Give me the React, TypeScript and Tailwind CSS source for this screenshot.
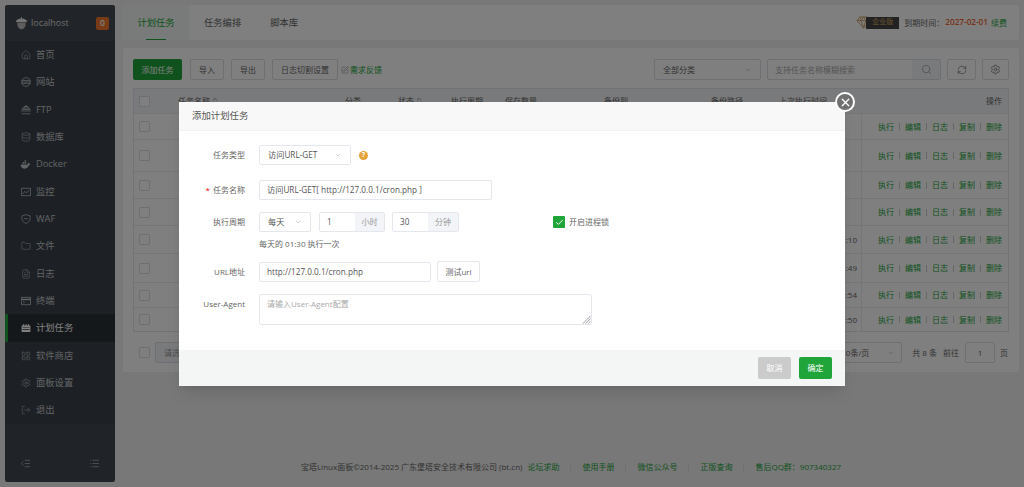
import type { ReactNode } from 'react';
import {
  House,
  Database,
  Shield,
  Folder,
  FileText,
  LayoutGrid,
  Settings,
  LogOut,
  IndentDecrease,
  List,
  ChevronDown,
  Search,
  RefreshCw,
  ChevronsUpDown,
  X,
  Check,
  SquarePen,
} from 'lucide-react';

function Acorn() {
  return (
    <svg viewBox="0 0 16 16" className="w-[13px] h-[14px] shrink-0">
      <path d="M1 5.5 C3 3 6 2.6 8 2.6 S13 3 15 5.5 L14 7 H2 Z" fill="#e8e8e8" />
      <path d="M7.4 0.5 h1.2 v2.4 h-1.2 Z" fill="#e8e8e8" />
      <path d="M3 7.6 H13 V10 C13 13 10 15.4 8 15.8 C6 15.4 3 13 3 10 Z" fill="#bdbdbd" />
    </svg>
  );
}

function Whale() {
  return (
    <svg viewBox="0 0 16 16" className="w-[11px] h-[11px]" fill="currentColor">
      <path d="M1 8 H11 C11 6.5 12 5 13 5 C13.5 6 13.6 6.6 13.5 7.2 C14.2 7 14.8 7.2 15.4 7.7 C14.8 8.8 13.8 9 13 9 C12.2 12 9.5 14 6 14 C3 14 1 11.5 1 8 Z" />
      <path d="M4 4.5 h2 v2.5 h-2 Z M6.8 4.5 h2 v2.5 h-2 Z M6.8 1.8 h2 v2.2 h-2 Z" />
    </svg>
  );
}

function Glyph({ children, fill }: { children: ReactNode; fill?: boolean }) {
  return (
    <svg
      viewBox="0 0 16 16"
      className="w-[10px] h-[10px]"
      fill={fill ? 'currentColor' : 'none'}
      stroke={fill ? 'none' : 'currentColor'}
      strokeWidth="1.2"
    >
      {children}
    </svg>
  );
}

const navIcon = 'w-[10px] h-[10px]';
const navItems: { label: string; icon: ReactNode; active?: boolean; h: string }[] = [
  { label: '首页', icon: <House className={navIcon} strokeWidth={1.3} />, h: 'h-[27px]' },
  {
    label: '网站',
    icon: (
      <Glyph>
        <circle cx="8" cy="8" r="7" />
        <path d="M1.5 5.5 H14.5 M1 8 H15 M1.5 10.5 H14.5" />
      </Glyph>
    ),
    h: 'h-[28px]',
  },
  {
    label: 'FTP',
    icon: (
      <Glyph>
        <path d="M2 11 A6.5 6.5 0 1 1 14 11 M1 14 H15 M2 7 H14 M8 1 V11 M5 11 C4 6 5 3 8 1 C11 3 12 6 11 11" />
      </Glyph>
    ),
    h: 'h-[27px]',
  },
  { label: '数据库', icon: <Database className={navIcon} strokeWidth={1.3} />, h: 'h-[27px]' },
  { label: 'Docker', icon: <Whale />, h: 'h-[28px]' },
  {
    label: '监控',
    icon: (
      <Glyph>
        <rect x="1" y="2" width="14" height="12" />
        <path d="M3 11 L6 7 L9 9.5 L13 5" />
      </Glyph>
    ),
    h: 'h-[27px]',
  },
  {
    label: 'WAF',
    icon: (
      <Glyph>
        <path d="M8 1 L14.5 3 V8 C14.5 11.5 11 14 8 15 C5 14 1.5 11.5 1.5 8 V3 Z M5 7.5 H11" />
      </Glyph>
    ),
    h: 'h-[27px]',
  },
  { label: '文件', icon: <Folder className={navIcon} strokeWidth={1.3} />, h: 'h-[28px]' },
  { label: '日志', icon: <FileText className={navIcon} strokeWidth={1.3} />, h: 'h-[27px]' },
  {
    label: '终端',
    icon: (
      <Glyph>
        <rect x="1" y="2" width="14" height="12" />
        <path d="M1 5.5 H15" strokeWidth="2.4" />
        <path d="M3.5 8 L5.5 10 L3.5 12" />
      </Glyph>
    ),
    h: 'h-[27px]',
  },
  {
    label: '计划任务',
    icon: (
      <Glyph fill>
        <path d="M1 4 H3.5 V1.5 H5 V4 H7.2 V1.5 H8.8 V4 H11 V1.5 H12.5 V4 H15 V14.5 H1 Z" />
        <path d="M2.5 7 H13.5 V8 H2.5 Z M2.5 10 H13.5 V11 H2.5 Z" fill="#2b3036" />
      </Glyph>
    ),
    active: true,
    h: 'h-[28px]',
  },
  { label: '软件商店', icon: <LayoutGrid className={navIcon} strokeWidth={1.3} />, h: 'h-[27px]' },
  { label: '面板设置', icon: <Settings className={navIcon} strokeWidth={1.3} />, h: 'h-[27px]' },
  { label: '退出', icon: <LogOut className={navIcon} strokeWidth={1.3} />, h: 'h-[28px]' },
];

function Sidebar() {
  return (
    <aside className="w-[110px] shrink-0 rounded-[3px] bg-[#3a424b] flex flex-col text-[#c4c6c8]">
      <div className="h-[36px] bg-[#434a53] rounded-t-[3px] flex items-center pl-[10px] pr-[6px] shrink-0">
        <Acorn />
        <span className="ml-[3px] text-[9px] text-[#d8d8d8]">localhost</span>
        <span className="ml-auto w-[13px] h-[13px] rounded-[2px] bg-[#f0762e] text-white text-[8.5px] font-semibold flex items-center justify-center">
          0
        </span>
      </div>
      <nav className="bg-[#3a424b]">
        {navItems.map((item) => (
          <div
            key={item.label}
            className={`${item.h} flex items-center text-[9.3px] ${
              item.active ? 'bg-[#2b3036] border-l-[3px] border-[#20a53a] pl-[12px] text-white' : 'pl-[15px]'
            }`}
          >
            <span className="w-[11px] mr-[5px] flex justify-center">{item.icon}</span>
            {item.label}
          </div>
        ))}
      </nav>
      <div className="mt-auto h-[59px] bg-[#40474f] rounded-b-[3px] flex items-end justify-between px-[15px] pb-[13px]">
        <IndentDecrease className="w-[11px] h-[11px]" strokeWidth={1.4} />
        <List className="w-[11px] h-[11px]" strokeWidth={1.4} />
      </div>
    </aside>
  );
}

function TopBar() {
  return (
    <div className="h-[35px] shrink-0 rounded-[3px] bg-white flex items-stretch text-[9.3px] text-[#666]">
      <div className="relative w-[66px] bg-[#f1f7f2] rounded-l-[3px] flex items-center justify-center text-[#20a53a]">
        计划任务
        <span className="absolute bottom-0 left-[23px] w-[20px] h-[1px] bg-[#20a53a]" />
      </div>
      <div className="ml-[15px] flex items-center">任务编排</div>
      <div className="ml-[29px] flex items-center">脚本库</div>
      <div className="ml-auto pr-[12px] flex items-center text-[8px]">
        <svg viewBox="0 0 16 14" className="w-[15px] h-[13px] text-[#c9a063]" fill="none" stroke="currentColor" strokeWidth="1">
          <path d="M4 1 H12 L15 5 L8 13 L1 5 Z M1 5 H15 M5.5 5 L8 13 L10.5 5 M4 1 L5.5 5 L8 1 L10.5 5 L12 1" />
        </svg>
        <span className="-ml-[5px] w-[33px] h-[12px] bg-[#444] text-[#d9a961] text-[7px] flex items-center justify-center">
          企业版
        </span>
        <span className="ml-[5px]">到期时间：</span>
        <span className="ml-[1px] text-[#f0652d] font-semibold text-[8.2px]">2027-02-01</span>
        <span className="ml-[3px] text-[#20a53a]">续费</span>
      </div>
    </div>
  );
}

function ToolButton({ w, children }: { w: string; children: ReactNode }) {
  return (
    <div className={`${w} h-[21px] rounded-[2px] border border-[#dcdfe6] bg-white flex items-center justify-center text-[8px] text-[#666]`}>
      {children}
    </div>
  );
}

function Toolbar() {
  return (
    <div className="flex items-center text-[8px] text-[#666]">
      <div className="w-[49px] h-[21px] rounded-[2px] bg-[#20a53a] text-white flex items-center justify-center">添加任务</div>
      <div className="ml-[8px]">
        <ToolButton w="w-[34px]">导入</ToolButton>
      </div>
      <div className="ml-[7px]">
        <ToolButton w="w-[34px]">导出</ToolButton>
      </div>
      <div className="ml-[7px]">
        <ToolButton w="w-[66px]">日志切割设置</ToolButton>
      </div>
      <SquarePen className="ml-[3px] w-[8px] h-[8px]" strokeWidth={1.3} />
      <span className="ml-[1px] text-[#20a53a]">需求反馈</span>
      <div className="ml-auto w-[107px] h-[21px] rounded-[2px] border border-[#dcdfe6] bg-white flex items-center justify-between px-[8px]">
        全部分类
        <ChevronDown className="w-[8px] h-[8px] text-[#bbb]" />
      </div>
      <div className="ml-[6px] w-[174px] h-[21px] rounded-[2px] border border-[#dcdfe6] bg-white flex items-center">
        <span className="pl-[7px] text-[#aaa]">支持任务名称模糊搜索</span>
        <span className="ml-auto w-[28px] h-full bg-[#f2f4f7] flex items-center justify-center">
          <Search className="w-[11px] h-[11px] text-[#888]" strokeWidth={1.3} />
        </span>
      </div>
      <div className="ml-[6px] w-[29px] h-[21px] rounded-[2px] border border-[#dcdfe6] bg-white flex items-center justify-center">
        <RefreshCw className="w-[10px] h-[10px]" strokeWidth={1.5} />
      </div>
      <div className="ml-[6px] w-[27px] h-[21px] rounded-[2px] border border-[#dcdfe6] bg-white flex items-center justify-center">
        <Settings className="w-[11px] h-[11px]" strokeWidth={1.4} />
      </div>
    </div>
  );
}

function Box() {
  return <span className="w-[11px] h-[11px] shrink-0 rounded-[1px] border border-[#dcdfe6] bg-white" />;
}

const rows = [
  { h: 'h-[26px]', time: '' },
  { h: 'h-[32px]', time: '' },
  { h: 'h-[27px]', time: '' },
  { h: 'h-[27px]', time: '' },
  { h: 'h-[28px]', time: ':10' },
  { h: 'h-[29px]', time: ':49' },
  { h: 'h-[25px]', time: ':54' },
  { h: 'h-[24px]', time: ':50' },
];

const actions = ['执行', '编辑', '日志', '复制', '删除'];

function TaskTable() {
  return (
    <div className="mt-[8px] border border-[#e4e7ed] text-[8px] text-[#666]">
      <div className="h-[24px] bg-[#f2f4f7] grid grid-cols-[44px_167px_53px_53px_54px_99px_107px_68px_82px_1fr] items-center">
        <span className="pl-[5px] flex">
          <Box />
        </span>
        <span className="flex items-center">
          任务名称
          <ChevronsUpDown className="ml-[1px] w-[8px] h-[8px]" />
        </span>
        <span>分类</span>
        <span className="flex items-center">
          状态
          <ChevronsUpDown className="ml-[1px] w-[8px] h-[8px]" />
        </span>
        <span>执行周期</span>
        <span>保存数量</span>
        <span>备份到</span>
        <span>备份路径</span>
        <span>上次执行时间</span>
        <span className="text-right pr-[6px]">操作</span>
      </div>
      {rows.map((row, i) => (
        <div key={i} className={`${row.h} border-t border-[#e9ebef] flex items-center`}>
          <span className="pl-[5px] flex">
            <Box />
          </span>
          <span className="ml-auto pr-[4px] text-[#666]">{row.time}</span>
          <div className="w-[147px] h-full border-l border-[#e9ebef] flex items-center justify-end pr-[6px] text-[#20a53a]">
            {actions.map((a, j) => (
              <span key={a} className="flex items-center">
                {j > 0 && <span className="mx-[5px] w-px h-[7px] bg-[#ccc]" />}
                {a}
              </span>
            ))}
          </div>
        </div>
      ))}
    </div>
  );
}

function Pagination() {
  return (
    <div className="mt-[10px] h-[21px] flex items-center text-[8px] text-[#666]">
      <span className="ml-[6px] flex">
        <Box />
      </span>
      <div className="ml-[5px] w-[60px] h-[21px] rounded-[2px] border border-[#dcdfe6] bg-[#f2f4f7] flex items-center pl-[8px] text-[#999]">
        请选择
      </div>
      <div className="ml-auto w-[70px] h-[21px] rounded-[2px] border border-[#dcdfe6] flex items-center justify-between pl-[8px] pr-[6px]">
        10条/页
        <ChevronDown className="w-[8px] h-[8px] text-[#bbb]" />
      </div>
      <span className="ml-[10px]">共 8 条</span>
      <span className="ml-[6px]">前往</span>
      <div className="ml-[6px] w-[30px] h-[21px] rounded-[2px] border border-[#dcdfe6] flex items-center justify-center">1</div>
      <span className="ml-[5px] mr-[1px]">页</span>
    </div>
  );
}

function Footer() {
  const links = ['论坛求助', '使用手册', '微信公众号', '正版查询', '售后QQ群：907340327'];
  return (
    <div className="mt-auto mb-[9px] flex justify-center text-[8px] text-[#666]">
      <span>宝塔Linux面板©2014-2025 广东堡塔安全技术有限公司 (bt.cn)</span>
      <span className="ml-[5px] flex items-center text-[#20a53a]">
        {links.map((l, i) => (
          <span key={l} className="flex items-center">
            {i > 0 && <span className="mx-[11px] w-px h-[8px] bg-[#ddd]" />}
            {l}
          </span>
        ))}
      </span>
    </div>
  );
}

function FormRow({ label, required, h, children }: { label: string; required?: boolean; h: string; children: ReactNode }) {
  return (
    <div className={`${h} flex items-start`}>
      <div className="w-[66px] h-[20px] flex items-center justify-end text-[8px] text-[#666]">
        {required && <span className="text-[#ef0808] mr-[3px]">*</span>}
        {label}
      </div>
      <div className="ml-[14px] flex items-start">{children}</div>
    </div>
  );
}

const inputClass =
  'h-[20px] rounded-[2px] border border-[#e4e7ed] bg-white flex items-center text-[8.2px] text-[#555]';

function Modal() {
  return (
    <div className="absolute left-[179px] top-[102px] w-[666px] h-[284px] rounded-[1px] bg-white flex flex-col shadow-lg">
      <div className="h-[29px] bg-[#f8f8f8] border-b border-[#f2f2f2] flex items-center pl-[13px] text-[9.4px] text-[#555]">
        添加计划任务
      </div>
      <div className="flex-1 pt-[14px]">
        <FormRow label="任务类型" h="h-[35px]">
          <div className={`${inputClass} w-[92px] justify-between px-[8px]`}>
            访问URL-GET
            <ChevronDown className="w-[8px] h-[8px] text-[#bbb]" />
          </div>
          <span className="ml-[8px] mt-[6px] w-[9px] h-[9px] rounded-full bg-[#e6a23c] text-white text-[7px] font-bold flex items-center justify-center">
            ?
          </span>
        </FormRow>
        <FormRow label="任务名称" required h="h-[32px]">
          <div className={`${inputClass} w-[233px] px-[7px]`}>访问URL-GET[ http://127.0.0.1/cron.php ]</div>
        </FormRow>
        <FormRow label="执行周期" h="h-[50px]">
          <div>
            <div className="flex items-center">
              <div className={`${inputClass} w-[52px] justify-between px-[8px]`}>
                每天
                <ChevronDown className="w-[8px] h-[8px] text-[#bbb]" />
              </div>
              <div className={`${inputClass} ml-[8px] w-[66px] pl-[7px]`}>
                1
                <span className="ml-auto w-[29px] h-full bg-[#f2f4f7] text-[#999] text-[8px] flex items-center justify-center">小时</span>
              </div>
              <div className={`${inputClass} ml-[7px] w-[67px] pl-[7px]`}>
                30
                <span className="ml-auto w-[30px] h-full bg-[#f2f4f7] text-[#999] text-[8px] flex items-center justify-center">分钟</span>
              </div>
              <span className="ml-[94px] w-[12px] h-[12px] rounded-[1px] bg-[#20a53a] flex items-center justify-center">
                <Check className="w-[9px] h-[9px] text-white" strokeWidth={2.5} />
              </span>
              <span className="ml-[4px] text-[8px] text-[#666]">开启进程锁</span>
            </div>
            <div className="mt-[6px] text-[8px] text-[#666] leading-[12px]">每天的 01:30 执行一次</div>
          </div>
        </FormRow>
        <FormRow label="URL地址" h="h-[32px]">
          <div className={`${inputClass} w-[172px] px-[7px]`}>http://127.0.0.1/cron.php</div>
          <div className="ml-[6px] -mt-[1px] w-[43px] h-[21px] rounded-[2px] border border-[#e4e7ed] flex items-center justify-center text-[8px] text-[#666]">
            测试url
          </div>
        </FormRow>
        <FormRow label="User-Agent" h="h-[31px]">
          <div className="relative w-[333px] h-[31px] rounded-[2px] border border-[#e4e7ed] px-[7px] pt-[3px] text-[8px] text-[#aaa]">
            请输入User-Agent配置
            <svg viewBox="0 0 10 10" className="absolute right-0 bottom-0 w-[9px] h-[9px] text-[#777]" stroke="currentColor" strokeWidth="0.8">
              <path d="M9.5 1 L1 9.5 M9.5 4 L4 9.5 M9.5 7 L7 9.5" />
            </svg>
          </div>
        </FormRow>
      </div>
      <div className="h-[36px] bg-[#f4f6f5] flex items-center justify-end pr-[13px] text-[8px] text-white">
        <div className="w-[33px] h-[22px] rounded-[2px] bg-[#cbcbcb] flex items-center justify-center">取消</div>
        <div className="ml-[8px] w-[33px] h-[22px] rounded-[2px] bg-[#20a53a] flex items-center justify-center">确定</div>
      </div>
      <div className="absolute -right-[10px] -top-[10px] w-[20px] h-[20px] rounded-full border-2 border-white bg-[#707070] flex items-center justify-center">
        <X className="w-[13px] h-[13px] text-white" strokeWidth={2.5} />
      </div>
    </div>
  );
}

export default function App() {
  return (
    <div className="relative w-[1024px] h-[487px] overflow-hidden bg-[#f0f0f0] font-['Open_Sans','Noto_Sans_CJK_SC',sans-serif]">
      <div className="h-full flex p-[5px] gap-[8px]">
        <Sidebar />
        <main className="flex-1 min-w-0 flex flex-col">
          <TopBar />
          <section className="mt-[8px] h-[324px] rounded-[3px] bg-white px-[10px] pt-[11px]">
            <Toolbar />
            <TaskTable />
            <Pagination />
          </section>
          <Footer />
        </main>
      </div>
      <div className="absolute inset-0 bg-black/50" />
      <Modal />
    </div>
  );
}
